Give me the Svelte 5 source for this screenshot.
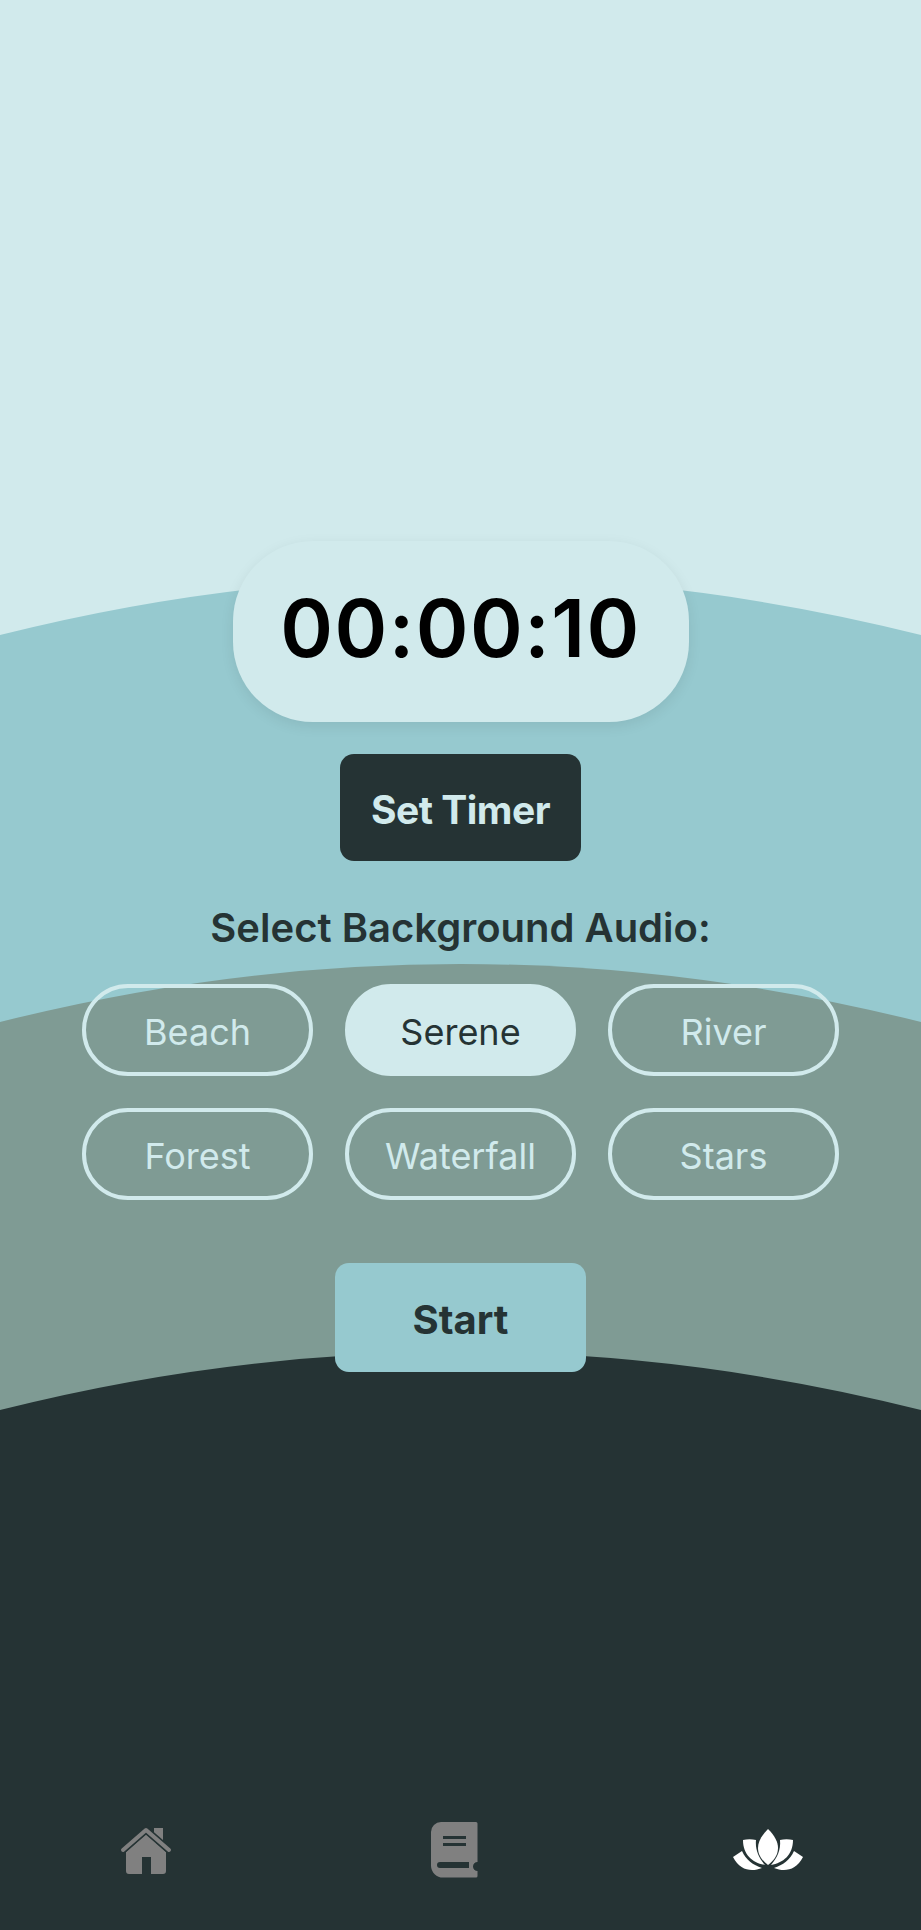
<script>
	const sounds = ['Beach', 'Serene', 'River', 'Forest', 'Waterfall', 'Stars'];
	let selected = $state('Serene');
</script>

<div class="page">
	<svg class="waves" viewBox="0 0 921 1930" aria-hidden="true">
		<path class="w1" d="M0 635Q460 519 921 635V1930H0Z" />
		<path class="w2" d="M0 1022Q460 906 921 1022V1930H0Z" />
		<path class="w3" d="M0 1410Q460 1294 921 1410V1930H0Z" />
	</svg>

	<main>
		<div class="timer">00:00:10</div>
		<button class="set">Set Timer</button>
		<h2>Select Background Audio:</h2>
		<div class="sounds">
			{#each sounds as s}
				<button class="chip" class:on={selected === s} onclick={() => (selected = s)}>{s}</button>
			{/each}
		</div>
		<button class="start">Start</button>
	</main>

	<nav>
		<svg class="home" width="54" height="54" viewBox="0 0 54 54">
			<rect x="35" y="5" width="9" height="15" fill="#808080" />
			<path d="M27 11 47 29V48a3 3 0 0 1-3 3H32V34H23V51H10a3 3 0 0 1-3-3V29Z" fill="#808080" />
			<path d="M4 27 27 7 50 27" fill="none" stroke="#253334" stroke-width="7" stroke-linecap="round" />
			<path d="M4 27 27 7 50 27" fill="none" stroke="#808080" stroke-width="4" stroke-linecap="round" stroke-linejoin="round" />
		</svg>
		<svg width="48" height="56" viewBox="0 0 48 56">
			<path
				fill="#808080"
				fill-rule="evenodd"
				d="M11 0H46a1.500 1.500 0 0 1 1.500 1.500V40a4 4 0 0 0 0 9V54a1.500 1.500 0 0 1-1.500 1.500H13A12 12 0 0 1 1 44V10A10 10 0 0 1 11 0ZM13 14V17H36V14ZM13 21V24H36V21ZM10 40a3 3 0 0 0 0 6H39V40Z"
			/>
		</svg>
		<svg width="72" height="44" viewBox="0 0 72 44">
			<g fill="#fff">
				<path d="M36 1C29 8 26 14 26 20C26 28 31 33 36 37C41 33 46 28 46 20C46 14 43 8 36 1Z" />
				<path d="M11 12C15 11 20 11 24 12C23 22 27 30 33 37C21 35 11 27 11 12Z" />
				<path d="M1 29C4 27 7 25 10 23C14 32 21 37 30 40C20 44 8 43 1 29Z" />
				<g transform="translate(72) scale(-1 1)">
					<path d="M11 12C15 11 20 11 24 12C23 22 27 30 33 37C21 35 11 27 11 12Z" />
					<path d="M1 29C4 27 7 25 10 23C14 32 21 37 30 40C20 44 8 43 1 29Z" />
				</g>
			</g>
		</svg>
	</nav>
</div>

<style>
	:global(body) {
		font-family: Inter, "Liberation Sans", sans-serif;
	}

	.page {
		position: relative;
		display: flex;
		flex-direction: column;
		height: 1930px;
		overflow: hidden;
		background: #d1eaec;
	}

	.waves {
		position: absolute;
		inset: 0;
		width: 921px;
		height: 1930px;
	}

	.w1 {
		fill: #96c9cf;
	}

	.w2 {
		fill: #7f9b94;
	}

	.w3 {
		fill: #253334;
	}

	main {
		position: relative;
		display: flex;
		flex-direction: column;
		align-items: center;
		padding-top: 541px;
	}

	button {
		font-family: inherit;
		border: none;
		padding: 0;
		cursor: pointer;
	}

	.timer {
		display: flex;
		align-items: center;
		justify-content: center;
		width: 456px;
		height: 181px;
		padding-bottom: 8px;
		box-sizing: border-box;
		border-radius: 80px;
		background: #d1eaec;
		box-shadow: 0 4px 14px rgba(0, 0, 0, 0.08);
		color: #000;
		font-size: 80px;
		font-weight: 600;
		letter-spacing: 1.5px;
	}

	.set {
		width: 241px;
		height: 107px;
		margin-top: 32px;
		padding-top: 4px;
		border-radius: 14px;
		background: #253334;
		color: #d1eaec;
		font-size: 39px;
		font-weight: 700;
		letter-spacing: -0.5px;
	}

	h2 {
		margin: 44px 0 0;
		color: #253334;
		font-size: 40px;
		font-weight: 600;
		line-height: 46px;
		letter-spacing: 0;
	}

	.sounds {
		display: grid;
		grid-template-columns: repeat(3, 231px);
		grid-auto-rows: 92px;
		gap: 32px;
		margin-top: 33px;
	}

	.chip {
		box-sizing: border-box;
		padding-top: 4px;
		border: 4px solid #d1eaec;
		border-radius: 46px;
		background: transparent;
		color: #d1eaec;
		font-size: 36px;
		font-weight: 400;
	}

	.chip.on {
		background: #d1eaec;
		color: #253334;
	}

	.start {
		width: 251px;
		height: 109px;
		margin-top: 63px;
		padding-top: 4px;
		border-radius: 14px;
		background: #96c9cf;
		color: #253334;
		font-size: 40px;
		font-weight: 700;
	}

	nav {
		position: relative;
		display: grid;
		grid-template-columns: 292px 323px 306px;
		justify-items: center;
		align-items: center;
		margin-top: auto;
		height: 56px;
		margin-bottom: 52px;
	}
</style>
